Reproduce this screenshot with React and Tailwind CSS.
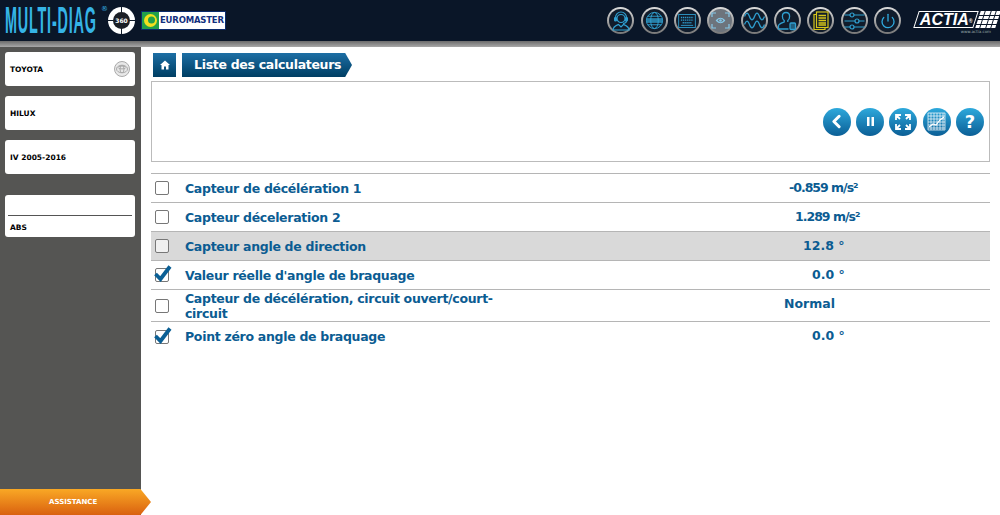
import React from 'react';
import { Power, ChevronLeft } from 'lucide-react';

const font = "font-['DejaVu_Sans',sans-serif]";
const blue = '#2f9fd0';

const rows = [
    { label: 'Capteur de décélération 1', value: '-0.859 m/s²', pad: 'pl-[274px]', tight: true },
    { label: 'Capteur déceleration 2', value: '1.289 m/s²', pad: 'pl-[280px]', tight: true },
    { label: 'Capteur angle de direction', value: '12.8 °', pad: 'pl-[288px]', active: true },
    { label: "Valeur réelle d'angle de braquage", value: '0.0 °', pad: 'pl-[297px]', checked: true },
    { label: 'Capteur de décélération, circuit ouvert/court-circuit', value: 'Normal', pad: 'pl-[269px]', tall: true },
    { label: 'Point zéro angle de braquage', value: '0.0 °', pad: 'pl-[297px]', checked: true, last: true },
];

const HeadsetIcon = () => (
    <svg width="20" height="20" viewBox="0 0 20 20" fill="none" stroke={blue} strokeWidth="1.200">
        <circle cx="10" cy="7.500" r="4" />
        <path d="M4.500 8V6.500a5.500 5.500 0 0 1 11 0V8" />
        <rect x="3.600" y="6.500" width="1.800" height="3.500" rx=".8" fill={blue} />
        <rect x="14.600" y="6.500" width="1.800" height="3.500" rx=".8" fill={blue} />
        <path d="M15.500 10c0 1.600-1.500 2.300-3.500 2.500" />
        <path d="M2 19c0-3.500 3-4.500 5.500-5.500L10 16l2.500-2.500c2.500 1 5.500 2 5.500 5.500z" />
    </svg>
);

const GlobeIcon = () => (
    <svg width="19" height="19" viewBox="0 0 20 20" fill="none" stroke={blue} strokeWidth="1">
        <circle cx="10" cy="10" r="8.500" />
        <ellipse cx="10" cy="10" rx="4" ry="8.500" />
        <path d="M3 5.500h14M3 14.500h14" />
        <rect x="1.500" y="7.500" width="17" height="5" fill={blue} opacity=".75" stroke="none" />
    </svg>
);

const KeyboardIcon = () => (
    <svg width="18" height="14" viewBox="0 0 20 16" fill="none" stroke={blue}>
        <rect x=".5" y=".5" width="19" height="15" />
        <path d="M3 4h14M3 7h14M5 10h10" strokeWidth="1.600" strokeDasharray="1.400 .8" />
        <path d="M3 13h14" />
    </svg>
);

const ScanIcon = () => (
    <svg width="19" height="17" viewBox="0 0 19 17" fill="none" stroke="#86c9ea" strokeWidth="1.200">
        <path d="M1 5V1h4M14 1h4v4M1 12v4h4M14 16h4v-4" />
        <path d="M5.500 8.500c2.500-3 5.500-3 8 0-2.500 3-5.500 3-8 0z" />
        <circle cx="9.500" cy="8.500" r="1.300" fill="#86c9ea" stroke="none" />
    </svg>
);

const WaveIcon = () => (
    <svg width="21" height="17" viewBox="0 0 21 17" fill="none" stroke={blue} strokeWidth="1.300">
        <path d="M.5 4.500c1.700-4.500 3.300-4.500 5 0s3.300 4.500 5 0 3.300-4.500 5 0 3.300 4.500 5 0" />
        <path d="M.5 12.500c1.700-4.500 3.300-4.500 5 0s3.300 4.500 5 0 3.300-4.500 5 0 3.300 4.500 5 0" />
    </svg>
);

const UserDocIcon = () => (
    <svg width="20" height="20" viewBox="0 0 20 20" fill="none" stroke={blue} strokeWidth="1.300">
        <path d="M9 1.500c-2.300 0-3.600 1.700-3.600 3.900 0 1.800.8 3.300 1.800 4.100v1.500c-2 .8-5.200 1.700-5.700 3.500v3.500h10" />
        <path d="M9 1.500c2.300 0 3.600 1.700 3.600 3.900 0 1.800-.8 3.300-1.800 4.100v1.500" />
        <rect x="13" y="12" width="5.500" height="6.500" rx="1" fill={blue} fillOpacity=".5" />
    </svg>
);

const FilesIcon = () => (
    <svg width="16" height="19" viewBox="0 0 16 19" fill="none" stroke="#d8c61a" strokeWidth="1.200">
        <path d="M3 3.500H1v15h11v-2" />
        <rect x="3.500" y="1" width="11.500" height="15.500" />
        <path d="M5.500 4.500h7.500M5.500 7h7.500M5.500 9.500h7.500M5.500 12h7.500M5.500 14h7.500" strokeWidth="1.300" />
    </svg>
);

const SlidersIcon = () => (
    <svg width="21" height="18" viewBox="0 0 21 18" fill="none" stroke={blue} strokeWidth="1.200">
        <path d="M.5 3h20M.5 9h20M.5 15h20" />
        <circle cx="8" cy="3" r="2" fill="#111c2b" />
        <circle cx="13" cy="9" r="2" fill="#111c2b" />
        <circle cx="8" cy="15" r="2" fill="#111c2b" />
    </svg>
);

const navIcons = [
    { icon: <HeadsetIcon /> },
    { icon: <GlobeIcon /> },
    { icon: <KeyboardIcon /> },
    { icon: <ScanIcon />, on: true },
    { icon: <WaveIcon /> },
    { icon: <UserDocIcon /> },
    { icon: <FilesIcon /> },
    { icon: <SlidersIcon /> },
    { icon: <Power size={16} strokeWidth={2} color="#2fa8dc" /> },
];

function NavButton({ icon, on }) {
    return (
        <div className="w-[27px] h-[27px] rounded-full bg-gradient-to-b from-[#dcdcdc] to-[#777] p-[2px]">
            <div className={`w-full h-full rounded-full flex items-center justify-center ${on ? 'bg-[#6d747c]' : 'bg-[#111c2b]'}`}>
                {icon}
            </div>
        </div>
    );
}

function ToolButton({ children }) {
    return (
        <div className="w-[28px] h-[28px] rounded-full bg-gradient-to-b from-[#2ea9dc] to-[#0b5f96] flex items-center justify-center text-white">
            {children}
        </div>
    );
}

function SideCard({ children, right }) {
    return (
        <div className="h-[34px] w-[130px] rounded-[3px] bg-white flex items-center justify-between pl-[5px] pr-[5px]">
            <span className="pt-[2px] text-[7.500px] font-bold text-black">{children}</span>
            {right}
        </div>
    );
}

function Check({ checked }) {
    return (
        <div className="relative w-[14px] h-[14px] shrink-0 rounded-[2px] border border-[#777] bg-white/60">
            {checked && (
                <svg className="absolute -left-[2px] -top-[6px]" width="18" height="19" viewBox="0 0 18 19">
                    <path d="M1.500 11 L6.500 16 L16 3.500" fill="none" stroke="#0a5f95" strokeWidth="3.800" />
                </svg>
            )}
        </div>
    );
}

function Row({ label, value, pad, checked, active, tall, last, tight }) {
    return (
        <div className={`flex items-center pl-1 text-[12.500px] font-bold text-[#0b5c92] border-[#b5b5b5] ${tall ? 'h-[32px]' : 'h-[29px]'} ${last ? '' : 'border-b'} ${active ? 'bg-[#d9d9d9]' : ''}`}>
            <Check checked={checked} />
            <div className="w-[330px] ml-4 shrink-0 leading-[15px] tracking-[-.3px]">{label}</div>
            <div className={`${pad} whitespace-nowrap ${tight ? 'tracking-[-1px]' : 'tracking-[0px]'} ${tall ? '-mt-[3px]' : ''}`}>{value}</div>
        </div>
    );
}

function Header() {
    return (
        <div className="h-[41px] bg-[#0a1628] flex items-center overflow-hidden">
            <div className="w-[103px] ml-[5px] shrink-0 relative h-[41px] flex items-center">
                <span className="inline-block origin-left scale-x-[.4] whitespace-nowrap text-[36px] font-bold tracking-[2px] leading-none text-[#35b4e6] font-['Liberation_Sans',sans-serif]">MULTI-DIAG</span>
                <span className="absolute left-[96px] top-[6px] text-[7px] leading-none text-[#35b4e6]">®</span>
            </div>
            <div className="relative w-[27px] h-[27px] mr-[6px] rounded-full bg-white flex items-center justify-center shrink-0">
                <div className="absolute left-0 right-0 top-[13px] h-[1px] bg-[#111c2b]" />
                <div className="absolute top-0 bottom-0 left-[13px] w-[1px] bg-[#111c2b]" />
                <div className="relative w-[17px] h-[17px] rounded-full bg-[#1b1f26] flex items-center justify-center text-[6px] font-bold text-white">360</div>
            </div>
            <div className="h-[19px] w-[85px] bg-white border border-[#0a2a6a] flex items-center gap-[1px] shrink-0">
                <svg width="17" height="17" viewBox="0 0 17 17" className="shrink-0">
                    <rect width="17" height="17" fill="#22a04a" />
                    <circle cx="8.500" cy="8.500" r="6.500" fill="#f2e01e" />
                    <circle cx="9.500" cy="8" r="3.500" fill="#22a04a" />
                </svg>
                <span className="text-[8.500px] font-bold text-[#12307e] tracking-[-.2px]">EUROMASTER</span>
            </div>
            <div className="ml-auto flex items-center gap-[6.350px] mr-[15px]">
                {navIcons.map((n, i) => <NavButton key={i} icon={n.icon} on={n.on} />)}
            </div>
            <div className="w-[83px] mr-[1px] shrink-0 pt-[4px]">
                <div className="flex items-center">
                    <div className="w-[60px] h-[17px] border border-white -skew-x-[18deg] flex items-center justify-center shrink-0">
                        <span className="skew-x-[18deg] italic font-bold text-[16px] leading-none text-white font-['Liberation_Sans',sans-serif]">ACTIA<sup className="text-[5px]">®</sup></span>
                    </div>
                    <div className="grid grid-cols-4 gap-[1px] w-[20px] ml-[2px] -skew-x-[18deg] shrink-0">
                        {Array.from({ length: 16 }).map((_, i) => <div key={i} className="h-[3.500px] bg-white" />)}
                    </div>
                </div>
                <div className="text-[4px] leading-[7px] text-[#9aa] text-right pr-2">www.actia.com</div>
            </div>
        </div>
    );
}

export default function App() {
    return (
        <div className={`relative w-[1000px] h-[515px] overflow-hidden bg-white ${font}`}>
            <Header />
            <div className="h-[6px] bg-gradient-to-b from-[#6b6b6b] to-[#a8a8a8]" />
            <div className="flex h-[468px]">
                <div className="w-[141px] bg-[#555553] pl-[5px] pt-[5px] flex flex-col gap-[10px] shrink-0">
                    <SideCard right={
                        <svg width="16" height="16" viewBox="0 0 16 16" fill="none" stroke="#aaa">
                            <circle cx="8" cy="8" r="7.500" fill="#e8e8e8" />
                            <ellipse cx="8" cy="8" rx="5.500" ry="3.800" />
                            <ellipse cx="8" cy="8" rx="2" ry="3.800" />
                            <ellipse cx="8" cy="6.500" rx="4" ry="1.400" />
                        </svg>
                    }>TOYOTA</SideCard>
                    <SideCard>HILUX</SideCard>
                    <SideCard>IV 2005-2016</SideCard>
                    <div className="mt-[11px] h-[42px] w-[130px] rounded-[3px] bg-white px-[3px] pt-[20px]">
                        <div className="border-t border-[#555] pl-[2px] pt-[6px] text-[7.500px] font-bold text-black">ABS</div>
                    </div>
                </div>
                <div className="flex-1 pl-[10px] pr-[10px] pt-[6px]">
                    <div className="flex h-[24px] pl-[2px] gap-[6px]">
                        <div className="w-[23px] bg-gradient-to-b from-[#1d6fa5] to-[#003e63] flex items-center justify-center">
                            <svg width="10" height="10" viewBox="0 0 10 10" fill="white">
                                <path d="M5 .5 L10 5 H8.500 V9.500 H6 V6.500 H4 V9.500 H1.500 V5 H0 Z" />
                            </svg>
                        </div>
                        <div className="w-[170px] bg-gradient-to-b from-[#1d6fa5] to-[#003e63] [clip-path:polygon(0_0,96%_0,100%_50%,96%_100%,0_100%)] flex items-center pl-[12px] text-[12.500px] tracking-[-.3px] font-bold text-white whitespace-nowrap">
                            Liste des calculateurs
                        </div>
                    </div>
                    <div className="mt-[4px] h-[81px] border border-[#bbb] flex items-center justify-end gap-[5.300px] pr-[5px]">
                        <ToolButton><ChevronLeft size={21} strokeWidth={3.500} /></ToolButton>
                        <ToolButton>
                            <svg width="9" height="9" viewBox="0 0 9 9" fill="white"><path d="M1 0h2.500v9H1zM5.500 0H8v9H5.500z" /></svg>
                        </ToolButton>
                        <ToolButton>
                            <svg width="18" height="18" viewBox="0 0 18 18" fill="none" stroke="white" strokeWidth="1.800">
                                <path d="M7 2H2v5M11 2h5v5M7 16H2v-5M11 16h5v-5M2.500 2.500l3.500 3.500M15.500 2.500L12 6M2.500 15.500L6 12M15.500 15.500L12 12" />
                            </svg>
                        </ToolButton>
                        <ToolButton>
                            <svg width="19" height="19" viewBox="0 0 19 19" fill="none" stroke="white" strokeWidth=".7">
                                <path d="M1 1h17v17H1zM4 1v17M7 1v17M10 1v17M13 1v17M16 1v17M1 4h17M1 7h17M1 10h17M1 13h17M1 16h17" />
                                <path d="M2 15l4-3 3 1 4-5 4-3" strokeWidth="1.200" />
                            </svg>
                        </ToolButton>
                        <ToolButton><span className="text-[18px] font-bold leading-none">?</span></ToolButton>
                    </div>
                    <div className="mt-[11px] border-t border-[#b5b5b5]">
                        {rows.map((r) => <Row key={r.label} {...r} />)}
                    </div>
                </div>
            </div>
            <div className="absolute left-0 bottom-0 w-[151px] h-[26px] bg-gradient-to-b from-[#f9a825] to-[#d9600f] [clip-path:polygon(0_0,93%_0,100%_50%,93%_100%,0_100%)] flex items-center pl-[49px] text-[7px] font-bold text-white">
                ASSISTANCE
            </div>
        </div>
    );
}
